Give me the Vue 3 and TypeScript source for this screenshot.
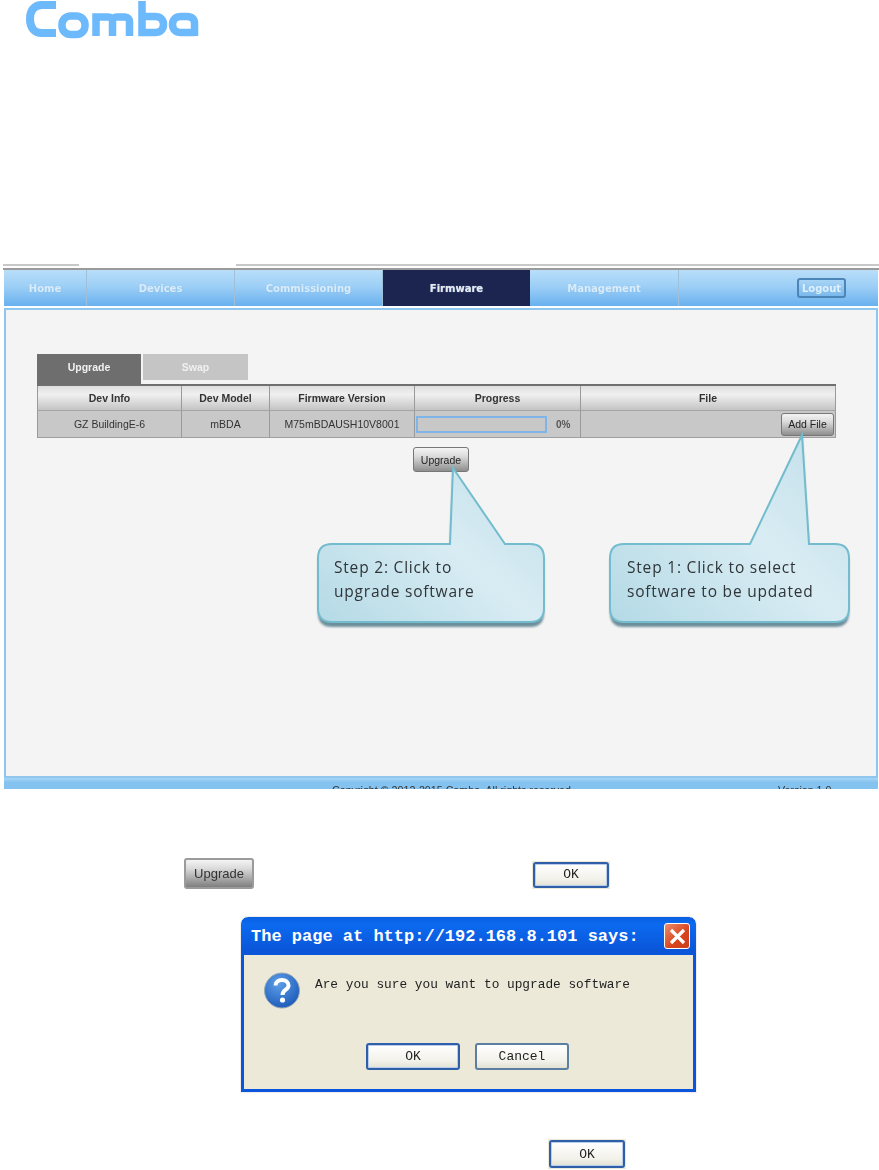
<script setup lang="ts">
const navItems = [
  { label: 'Home', width: 83, active: false },
  { label: 'Devices', width: 148, active: false },
  { label: 'Commissioning', width: 148, active: false },
  { label: 'Firmware', width: 147, active: true },
  { label: 'Management', width: 149, active: false },
]
const headers = ['Dev Info', 'Dev Model', 'Firmware Version', 'Progress', 'File']
</script>

<template>
  <div class="page">
    <svg class="logo" width="176" height="40" viewBox="24 0 176 40" role="img" aria-label="Comba">
      <g fill="none" stroke="#6cb9fb" stroke-width="7.5">
        <path d="M56 5H42C34 5 30 10.500 30 19S34 33 42 33H56" stroke-width="8" />
        <rect x="62" y="16" width="23" height="18.500" rx="8.500" />
        <path d="M96 36V17H108C111 17 112.500 18.500 112.500 21V36M112.500 21C112.500 18.500 114 17 117 17H125C128 17 129.500 19 129.500 22V36" />
        <path d="M142 1V32.500H155C160.500 32.500 163.500 29.500 163.500 24.500S160.500 16.500 155 16.500H142" />
        <path d="M194.500 32.500H181C175.500 32.500 172.500 29.500 172.500 24.500S175.500 16.500 181 16.500H187C192 16.500 194.500 19 194.500 23V36" />
      </g>
    </svg>

    <section class="shot">
      <div class="browser-top"><span class="browser-tab"></span></div>
      <nav class="nav">
        <a
          v-for="item in navItems"
          :key="item.label"
          class="nav-item"
          :class="{ active: item.active }"
          :style="{ width: item.width + 'px' }"
        >{{ item.label }}</a>
        <div class="nav-rest"><button class="logout">Logout</button></div>
      </nav>

      <main class="panel">
        <div class="tabs">
          <div class="tab on">Upgrade</div>
          <div class="tab off">Swap</div>
        </div>
        <div class="table">
          <div v-for="h in headers" :key="h" class="th">{{ h }}</div>
          <div class="td">GZ BuildingE-6</div>
          <div class="td">mBDA</div>
          <div class="td">M75mBDAUSH10V8001</div>
          <div class="td progress">
            <span class="bar"></span><span class="pct">0%</span>
          </div>
          <div class="td file"><button class="grey add">Add File</button></div>
        </div>
        <div class="actions"><button class="grey upgrade">Upgrade</button></div>

        <svg class="callouts" width="874" height="340" viewBox="0 0 874 340">
          <defs>
            <linearGradient id="cg" x1="0" y1="1" x2="1" y2="0.2">
              <stop offset="0" stop-color="#b4dae6" />
              <stop offset="0.6" stop-color="#d9ecf3" />
              <stop offset="1" stop-color="#c4e1eb" />
            </linearGradient>
            <filter id="sh" x="-5%" y="-5%" width="110%" height="115%"><feGaussianBlur stdDeviation="0.8" /></filter>
          </defs>
          <g transform="translate(-6,-310)">
            <path d="M332 548H450L453 470L505 548H530Q544 548 544 562V613Q544 627 530 627H332Q318 627 318 613V562Q318 548 332 548Z" fill="#6d8f9b" filter="url(#sh)" />
            <path d="M624 548H750L802 437L809 548H835Q849 548 849 562V613Q849 627 835 627H624Q610 627 610 613V562Q610 548 624 548Z" fill="#6d8f9b" filter="url(#sh)" />
            <path d="M332 544H450L453 468L505 544H530Q544 544 544 558V608Q544 622 530 622H332Q318 622 318 608V558Q318 544 332 544Z" fill="url(#cg)" stroke="#73bccd" stroke-width="2" />
            <path d="M624 544H750L802 435L809 544H835Q849 544 849 558V608Q849 622 835 622H624Q610 622 610 608V558Q610 544 624 544Z" fill="url(#cg)" stroke="#73bccd" stroke-width="2" />
          </g>
        </svg>
        <p class="note n2">Step 2: Click to<br />upgrade software</p>
        <p class="note n1">Step 1: Click to select<br />software to be updated</p>
      </main>

      <footer class="foot">
        <span class="copy">Copyright © 2012-2015 Comba. All rights reserved</span>
        <span class="ver">Version 1.0</span>
      </footer>
    </section>

    <div class="inline-row">
      <button class="grey big">Upgrade</button>
      <span class="xp-frame"><button class="xp default wide">OK</button></span>
    </div>

    <div class="dialog">
      <header class="title">
        <span>The page at http://192.168.8.101 says:</span>
        <span class="close">
          <svg width="17" height="17" viewBox="0 0 17 17"><path d="M2 2L15 15M15 2L2 15" stroke="#fff" stroke-width="3.2" /></svg>
        </span>
      </header>
      <div class="body">
        <div class="msg">
          <svg class="qicon" width="38" height="38" viewBox="0 0 38 38">
            <defs>
              <radialGradient id="qg" cx="0.4" cy="0.3" r="0.8">
                <stop offset="0" stop-color="#5f9fe8" />
                <stop offset="1" stop-color="#1655b5" />
              </radialGradient>
            </defs>
            <circle cx="19" cy="19.500" r="17.500" fill="url(#qg)" stroke="#9aa7b5" stroke-width="1" />
            <path d="M12.500 14.500C12.500 7 25.500 7 25.500 14.500C25.500 19 19.500 18.500 19.500 24" fill="none" stroke="#fff" stroke-width="4" />
            <circle cx="19.500" cy="29" r="2.600" fill="#fff" />
          </svg>
          <span>Are you sure you want to upgrade software</span>
        </div>
        <div class="buttons">
          <button class="xp default">OK</button>
          <button class="xp">Cancel</button>
        </div>
      </div>
    </div>

    <div class="last-row"><span class="xp-frame"><button class="xp default wide last">OK</button></span></div>
  </div>
</template>

<style scoped>
.page {
  position: relative;
  width: 879px;
  height: 1170px;
  overflow: hidden;
  background: #fff;
  font-family: "Liberation Sans", Arial, sans-serif;
}
button { padding: 0; margin: 0; cursor: default; }
.logo { display: block; margin-left: 24px; margin-bottom: 224px; filter: blur(0.5px); }

.shot {
  margin-left: 3px;
  width: 876px;
  height: 525px;
  overflow: hidden;
  display: flex;
  flex-direction: column;
  filter: blur(0.5px);
}
.browser-top {
  flex: none;
  height: 2px;
  border-top: 2px solid #c8c8c8;
  border-bottom: 2px solid #9b9b9b;
  background: #fff;
  position: relative;
}
.browser-tab {
  position: absolute;
  left: 76px;
  top: -2px;
  width: 157px;
  height: 4px;
  background: #fff;
}
.nav { flex: none; display: flex; height: 36px; margin-left: 1px; margin-right: 1px; background: linear-gradient(#b9def9, #9dcff6 45%, #69b1ef); }
.nav-item {
  display: flex;
  align-items: center;
  justify-content: center;
  border-right: 1px solid #9fc0d8;
  box-sizing: border-box;
  font: bold 10px "DejaVu Sans", Verdana, sans-serif;
  color: #d9ecfb;
  text-shadow: 0 0 1px #8fbde0;
}
.nav-item.active { background: #1c2450; color: #e8e8f0; border-right: 0; }
.nav-rest { flex: 1; display: flex; align-items: center; justify-content: flex-end; padding-right: 32px; }
.logout {
  width: 49px;
  height: 20px;
  border: 2px solid #4c86b8;
  border-radius: 3px;
  background: linear-gradient(#a8d4f5, #7ab9ec);
  color: #dff0fd;
  font: bold 10px "DejaVu Sans", sans-serif;
}

.panel {
  flex: none;
  position: relative;
  margin: 2px 1px 0;
  height: 470px;
  box-sizing: border-box;
  border: 2px solid #8fc6ee;
  background: #f4f4f4;
  padding: 44px 40px 0 31px;
}
.tabs { display: flex; gap: 2px; align-items: flex-start; height: 30px; }
.tab {
  width: 104px;
  display: flex;
  align-items: center;
  justify-content: center;
  font: bold 10.5px "Liberation Sans", Arial, sans-serif;
  color: #f0f0f0;
}
.tab.on { height: 30px; box-sizing: border-box; padding-bottom: 4px; background: #6e6e6e; }
.tab.off { height: 26px; width: 105px; background: #c5c5c5; }
.table {
  display: grid;
  grid-template-columns: 145px 88px 145px 166px 255px;
  grid-template-rows: 25px 27px;
  border-top: 2px solid #6f6f6f;
  width: 799px;
  box-sizing: content-box;
}
.th, .td {
  display: flex;
  align-items: center;
  justify-content: center;
  font-size: 10.5px;
  color: #333;
  box-sizing: border-box;
  border-right: 1px solid #9a9a9a;
}
.th {
  font-weight: bold;
  background: linear-gradient(#dedede, #f0f0f0 35%, #c4c4c4);
  border-bottom: 1px solid #a5a5a5;
}
.td { background: #c8c8c8; border-bottom: 1px solid #a0a0a0; }
.th:first-child, .td:nth-child(6) { border-left: 1px solid #9a9a9a; }
.progress { justify-content: flex-start; padding-left: 1px; gap: 9px; }
.bar {
  width: 131px;
  height: 17px;
  box-sizing: border-box;
  border: 2px solid #7fb4e6;
  background: #c8c8c8;
}
.pct { font-weight: bold; font-size: 10px; color: #555; }
.file { justify-content: flex-end; padding-right: 1px; align-items: center; }
.grey {
  border: 1px solid #777;
  border-radius: 3px;
  background: linear-gradient(#f4f4f4, #dcdcdc 35%, #8e8e8e);
  color: #222;
  font-family: "Liberation Sans", Arial, sans-serif;
  font-size: 10.5px;
}
.add { width: 53px; height: 23px; }
.actions { padding-left: 376px; padding-top: 9px; }
.upgrade { width: 56px; height: 25px; }
.callouts { position: absolute; left: 0; top: 0; pointer-events: none; }
.note {
  position: absolute;
  margin: 0;
  font: 15.500px/24px "Open Sans", "Noto Sans", sans-serif;
  letter-spacing: 0.8px;
  white-space: nowrap;
  color: #2f3538;
}
.n2 { left: 328px; top: 245px; }
.n1 { left: 621px; top: 245px; }

.foot {
  flex: none;
  margin: 0 1px;
  height: 11px;
  background: linear-gradient(#a8d6f6, #84c3f0 40%);
  position: relative;
  overflow: hidden;
  font-size: 10.700px;
  color: #333;
}
.copy { position: absolute; left: 328px; top: 6px; white-space: nowrap; }
.ver { position: absolute; left: 774px; top: 6px; white-space: nowrap; }

.inline-row {
  position: relative;
  display: flex;
  align-items: center;
  margin-top: 69px;
  margin-left: 184px;
  height: 31px;
  gap: 278px;
  filter: blur(0.4px);
}
.big {
  width: 70px;
  height: 31px;
  font-size: 13px;
  border: 2px solid #9b9b9b;
  background: linear-gradient(#f4f4f4, #dcdcdc 30%, #7f7f7f);
  color: #333;
}
.xp-frame { display: inline-flex; background: #ece9d8; padding: 1px; margin-top: 2px; }
.xp {
  font: 13px "Liberation Mono", monospace;
  color: #222;
  width: 94px;
  height: 27px;
  border: 2px solid #5b7fa3;
  border-radius: 3px;
  background: linear-gradient(#fff, #f2f1ea 70%, #e3e1d4);
}
.xp.default { border-color: #2f5fa8; box-shadow: inset 0 0 0 1px #b7cdea; }
.xp.wide { width: 76px; height: 26px; font-size: 13px; }
.xp.wide.last { height: 28px; }

.dialog {
  margin: 28px 0 0 241px;
  width: 455px;
  height: 175px;
  box-sizing: border-box;
  border: 3px solid #0b55dc;
  border-top: 0;
  border-radius: 7px 7px 0 0;
  background: #ece9d8;
  outline: 1px solid #eeeeee;
  display: flex;
  flex-direction: column;
  filter: blur(0.4px);
}
.title {
  flex: none;
  height: 38px;
  margin: 0 -3px;
  padding: 0 6px 0 10px;
  display: flex;
  align-items: center;
  justify-content: space-between;
  background: linear-gradient(#0a5fe0, #0c6af0 20%, #0a55d8 90%);
  border-radius: 7px 7px 0 0;
  color: #fff;
  font: bold 17px "Liberation Mono", monospace;
  white-space: pre;
}
.close {
  width: 26px;
  height: 26px;
  display: flex;
  align-items: center;
  justify-content: center;
  box-sizing: border-box;
  border: 1px solid #fff;
  border-radius: 3px;
  background: linear-gradient(135deg, #ef8d6c, #d8431c 60%, #c9401a);
}
.body { flex: 1; display: flex; flex-direction: column; }
.msg {
  display: flex;
  align-items: flex-start;
  gap: 14px;
  padding: 16px 0 0 19px;
  height: 72px;
  box-sizing: border-box;
  font: 12.8px "Liberation Mono", monospace;
  color: #222;
}
.msg span { padding-top: 6px; }
.qicon { flex: none; }
.buttons { margin-top: 16px; display: flex; justify-content: flex-start; gap: 15px; padding-left: 122px; }

.last-row { margin-top: 45px; margin-left: 548px; filter: blur(0.4px); }
</style>

<style>
html, body { margin: 0; background: #fff; }
</style>
